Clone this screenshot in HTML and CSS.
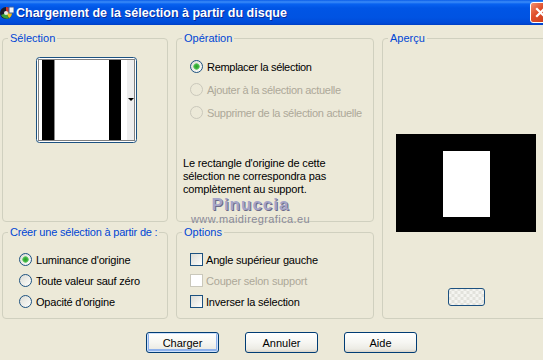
FILE: index.html
```html
<!DOCTYPE html>
<html lang="fr">
<head>
    <meta charset="UTF-8">
    <meta name="viewport" content="width=device-width, initial-scale=1.0">
    <title>Chargement de la sélection</title>
    <link rel="stylesheet" href="styles.css">
</head>
<body>
    <div class="window">
        <div class="titlebar">
            <svg class="app-icon" width="14" height="14" viewBox="0 0 14 14">
                <circle cx="6" cy="7" r="6" fill="#1a1a2a"/>
                <path d="M6 7 L6 1 A6 6 0 0 1 11.5 5 Z" fill="#d23a2a"/>
                <path d="M6 7 L11.5 5 A6 6 0 0 1 9 12.2 Z" fill="#f0c020"/>
                <path d="M6 7 L9 12.2 A6 6 0 0 1 1 9 Z" fill="#3aa03a"/>
                <circle cx="6" cy="7" r="2" fill="#e8e8e8"/>
                <rect x="9" y="1" width="5" height="6" fill="#f4f4f4" stroke="#3a5fa0" stroke-width="1"/>
            </svg>
            <span class="title">Chargement de la sélection à partir du disque</span>
            <span class="close">
                <svg width="13" height="13" viewBox="0 0 13 13">
                    <path d="M3 3 L10 10 M10 3 L3 10" stroke="#fff" stroke-width="2.2" stroke-linecap="square"/>
                </svg>
            </span>
        </div>

        <div class="content">
            <div class="groups">
                <fieldset class="group sel">
                    <legend>Sélection</legend>
                    <div class="thumb">
                        <svg width="101" height="86" viewBox="0 0 101 86">
                            <rect x="0.5" y="0.5" width="100" height="85" rx="3" fill="#fff" stroke="#1c5180"/>
                            <rect x="91" y="3" width="7" height="80" fill="#eeeeee"/>
                            <rect x="6" y="3" width="12" height="80" fill="#000"/>
                            <rect x="18" y="3" width="1" height="80" fill="#8c8c8c"/>
                            <rect x="73" y="3" width="12" height="80" fill="#000"/>
                            <rect x="2.5" y="2.5" width="96" height="81" fill="none" stroke="#000" stroke-dasharray="1 1"/>
                            <polygon points="92,41 98,41 95,44" fill="#000"/>
                        </svg>
                    </div>
                </fieldset>

                <fieldset class="group op">
                    <legend>Opération</legend>
                    <label class="row"><input type="radio" name="op" checked>Remplacer la sélection</label>
                    <label class="row off"><input type="radio" name="op" disabled>Ajouter à la sélection actuelle</label>
                    <label class="row off"><input type="radio" name="op" disabled>Supprimer de la sélection actuelle</label>
                    <p class="note">Le rectangle d'origine de cette<br>sélection ne correspondra pas<br>complètement au support.</p>
                </fieldset>

                <fieldset class="group preview">
                    <legend>Aperçu</legend>
                    <div class="canvas">
                        <div class="shape"></div>
                    </div>
                    <button class="mini" type="button"></button>
                </fieldset>

                <fieldset class="group create">
                    <legend>Créer une sélection à partir de :</legend>
                    <label class="row"><input type="radio" name="src" checked>Luminance d'origine</label>
                    <label class="row"><input type="radio" name="src">Toute valeur sauf zéro</label>
                    <label class="row"><input type="radio" name="src">Opacité d'origine</label>
                </fieldset>

                <fieldset class="group options">
                    <legend>Options</legend>
                    <label class="row"><input type="checkbox">Angle supérieur gauche</label>
                    <label class="row off"><input type="checkbox" disabled>Couper selon support</label>
                    <label class="row"><input type="checkbox">Inverser la sélection</label>
                </fieldset>

                <!-- filigrane de l'auteur -->
                <div class="watermark">
                    <span class="wm-name">Pinuccia</span>
                    <span class="wm-url">www.maidiregrafica.eu</span>
                </div>
            </div>

            <div class="buttons">
                <button class="btn default" type="button">Charger</button>
                <button class="btn" type="button">Annuler</button>
                <button class="btn" type="button">Aide</button>
            </div>
        </div>
    </div>
</body>
</html>
```

FILE: styles.css
```css
body {
    margin: 0;
    width: 543px;
    height: 360px;
    overflow: hidden;
    background: #ece9d8;
    font-family: "Liberation Sans", Arial, sans-serif;
    font-size: 11px;
    color: #000;
}

.window {
    width: 556px;
    height: 360px;
    background: #ece9d8;
}

.titlebar {
    height: 25px;
    display: flex;
    align-items: center;
    background: linear-gradient(#0a5de8 0, #3b8cf8 2px, #0862f0 4px, #0055e5 8px, #0053e2 70%, #004bd8 92%, #003fc4 100%);
    color: #fff;
}

.app-icon {
    margin: 0 2px 0 0;
    flex: none;
}

.title {
    font-weight: bold;
    font-size: 12.5px;
    text-shadow: 1px 1px 0 #0a2a9a;
    white-space: nowrap;
}

.close {
    margin-left: auto;
    margin-right: 5px;
    width: 21px;
    height: 21px;
    box-sizing: border-box;
    border: 1px solid #fff;
    border-radius: 3px;
    background: linear-gradient(135deg, #f09070 0, #e0502c 40%, #c83a18 100%);
    display: flex;
    align-items: center;
    justify-content: center;
}

.content {
    padding: 7px 0 0 2px;
}

.groups {
    position: relative;
    display: grid;
    grid-template-columns: 166px 198px 168px;
    grid-template-rows: 190px 93px;
    column-gap: 8px;
    row-gap: 4px;
    grid-template-areas:
        "sel op prev"
        "create options prev";
}

.group {
    margin: 0;
    min-width: 0;
    padding: 0 5px;
    border: 1px solid #d0d0bf;
    border-radius: 4px;
    display: flex;
    flex-direction: column;
}

.group legend {
    padding: 0 2px;
    line-height: 13px;
    color: #0046d5;
    white-space: nowrap;
}

.create legend {
    letter-spacing: -0.2px;
}

.sel { grid-area: sel; }
.op { grid-area: op; padding-top: 10px; }
.preview { grid-area: prev; align-items: center; }
.create { grid-area: create; padding-top: 10px; }
.options { grid-area: options; padding-top: 10px; }

.thumb {
    margin: 12px 0 0 28px;
    height: 86px;
}

.row {
    display: flex;
    align-items: center;
    height: 23px;
    white-space: nowrap;
    letter-spacing: -0.3px;
}

.create .row,
.options .row {
    height: 21px;
    letter-spacing: -0.2px;
}

.op .row,
.options .row {
    padding-left: 8px;
}

.create .row {
    padding-left: 11px;
}

.row.off {
    color: #aca899;
}

input[type="radio"],
input[type="checkbox"] {
    appearance: none;
    -webkit-appearance: none;
    width: 13px;
    height: 13px;
    margin: 0 4px 0 0;
    flex: none;
    border: 1px solid #1c5180;
    background: linear-gradient(135deg, #dcdcd5 0, #f4f4f0 70%, #fff 100%);
}

input[type="radio"] {
    border-radius: 50%;
}

input[type="radio"]:checked {
    background:
        radial-gradient(circle, #2a9e2a 0, #3cb43c 2px, #7fd07f 3px, transparent 3.5px),
        linear-gradient(135deg, #dcdcd5 0, #f4f4f0 70%, #fff 100%);
}

input[type="radio"]:disabled {
    border-color: #cac8bb;
    background: #ece9d8;
}

input[type="checkbox"]:disabled {
    border-color: #cac8bb;
    background: #fff;
}

.options input[type="checkbox"] {
    margin-right: 3px;
}

.note {
    margin: 33px 0 0 1px;
    line-height: 13px;
    letter-spacing: -0.15px;
}

.canvas {
    margin-top: 89px;
    width: 140px;
    height: 98px;
    background: #000;
    display: flex;
    padding: 17px 0 0 47px;
    box-sizing: border-box;
}

.shape {
    width: 47px;
    height: 66px;
    background: #fff;
}

.mini {
    margin-top: 56px;
    width: 37px;
    height: 18px;
    padding: 0;
    border: 1px solid #1c5180;
    border-radius: 3px;
    background:
        repeating-conic-gradient(#f4f4f0 0 25%, #e2e2dc 0 50%) 50% 50% / 6px 6px;
}

.watermark {
    position: absolute;
    left: 189px;
    top: 165px;
    display: flex;
    flex-direction: column;
    align-items: center;
    pointer-events: none;
}

.wm-name {
    font-size: 17px;
    font-weight: bold;
    line-height: 16px;
    letter-spacing: 1px;
    color: #a4a4c8;
    text-shadow: 1px 1px 0 #6a6a8a;
}

.wm-url {
    font-size: 11px;
    line-height: 12px;
    letter-spacing: 0.4px;
    color: #8a8a98;
}

.buttons {
    display: flex;
    gap: 26px;
    padding: 13px 0 0 144px;
}

.btn {
    width: 73px;
    height: 21px;
    padding: 0;
    border: 1px solid #003c74;
    border-radius: 3px;
    background: linear-gradient(#ffffff 0, #f6f6f2 50%, #ecebe4 85%, #d8d3c8 100%);
    font-family: "Liberation Sans", Arial, sans-serif;
    font-size: 11px;
    color: #000;
}

.btn.default {
    box-shadow: inset 0 0 0 1px #cde0fb, inset 0 -1px 0 2px #8fb2ec;
}
```
